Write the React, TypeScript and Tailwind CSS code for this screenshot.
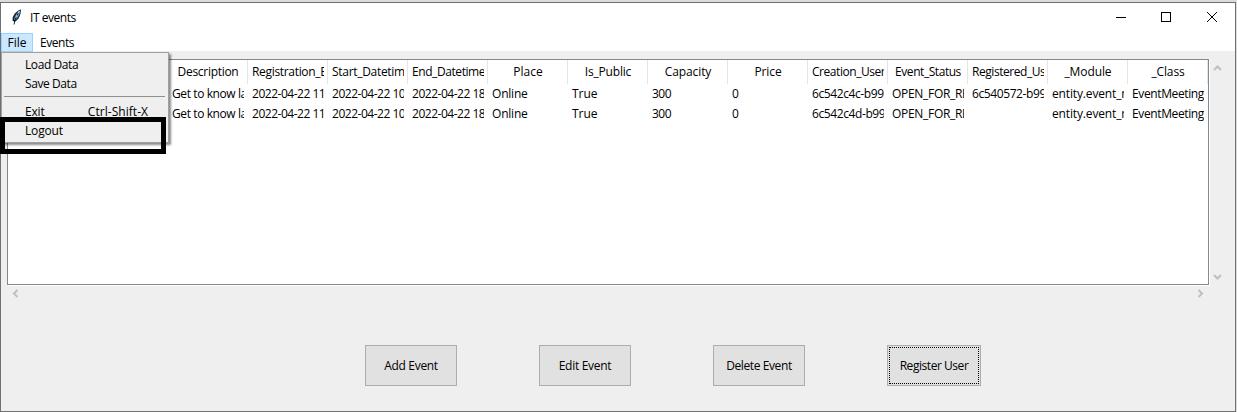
import React from "react";

type Column = { title: string; cells: [string, string]; head: string; body: string };

const columns: Column[] = [
  { title: "", cells: ["", ""], head: "", body: "" },
  { title: "", cells: ["", ""], head: "", body: "" },
  { title: "Description", cells: ["Get to know la", "Get to know la"], head: "tracking-[-0.3px]", body: "tracking-[-0.4px]" },
  { title: "Registration_E", cells: ["2022-04-22 11", "2022-04-22 11"], head: "tracking-[-0.32px]", body: "tracking-[-0.48px]" },
  { title: "Start_Datetim", cells: ["2022-04-22 10", "2022-04-22 10"], head: "tracking-[-0.3px]", body: "tracking-[-0.48px]" },
  { title: "End_Datetime", cells: ["2022-04-22 18", "2022-04-22 18"], head: "tracking-[-0.42px]", body: "tracking-[-0.48px]" },
  { title: "Place", cells: ["Online", "Online"], head: "", body: "tracking-[-0.2px]" },
  { title: "Is_Public", cells: ["True", "True"], head: "tracking-[-0.2px]", body: "" },
  { title: "Capacity", cells: ["300", "300"], head: "tracking-[-0.1px]", body: "tracking-[-0.5px]" },
  { title: "Price", cells: ["0", "0"], head: "tracking-[-0.1px]", body: "" },
  { title: "Creation_User", cells: ["6c542c4c-b99", "6c542c4d-b99"], head: "tracking-[-0.45px]", body: "tracking-[-0.4px]" },
  { title: "Event_Status", cells: ["OPEN_FOR_RE", "OPEN_FOR_RE"], head: "tracking-[-0.45px]", body: "tracking-[-0.3px]" },
  { title: "Registered_Us", cells: ["6c540572-b99", ""], head: "tracking-[-0.45px]", body: "tracking-[-0.4px]" },
  { title: "_Module", cells: ["entity.event_m", "entity.event_m"], head: "tracking-[-0.1px]", body: "tracking-[-0.15px]" },
  { title: "_Class", cells: ["EventMeeting", "EventMeeting"], head: "tracking-[-0.15px]", body: "tracking-[-0.38px]" },
];

function Feather() {
  return (
    <svg width="12" height="17" viewBox="0 0 12 17" className="block">
      <path d="M10 0.5C7 1 3 4.500 1.700 8.500L1.500 11.500L3.500 13C6.500 11.500 9 8 9.500 4.500Z" fill="#1b2129" />
      <path d="M9 1.200C6.500 3 4 6 3 10.500L4.200 11.200C6.500 9 8.500 6 9 3.500Z" fill="#6398d0" />
      <path d="M7.400 4C5.500 7 4 10.500 3 15.500" stroke="#111" strokeWidth="0.9" fill="none" />
      <path d="M8.300 2L7 4.500M6 6L5 8.500" stroke="#b8d8f2" strokeWidth="1" />
    </svg>
  );
}

function Chevron({ d }: { d: string }) {
  return (
    <svg width="9" height="9" viewBox="0 0 9 9" className="block">
      <path d={d} stroke="#bfbfbf" strokeWidth="2" fill="none" />
    </svg>
  );
}

function TitleBar() {
  return (
    <div className="flex h-[30px] shrink-0 items-start justify-between bg-white">
      <div className="flex pl-[10px] pt-[6px]">
        <Feather />
        <span className="ml-[7px] leading-[17px] tracking-[-0.45px]">IT events</span>
      </div>
      <svg width="138" height="30" viewBox="0 0 138 30" stroke="#000" fill="none" shapeRendering="crispEdges">
        <path d="M19 14.500H29" />
        <rect x="64.500" y="9.500" width="9" height="9" />
        <path d="M110 9L120 19M120 9L110 19" shapeRendering="auto" />
      </svg>
    </div>
  );
}

function MenuItem({ label, keys, style }: { label: string; keys?: string; style: string }) {
  return (
    <div className={`flex h-[19px] items-center justify-between pl-[23px] pr-[20px] ${style}`}>
      <span>{label}</span>
      {keys && <span className="tracking-[0.04px]">{keys}</span>}
    </div>
  );
}

function FileMenu() {
  return (
    <div className="absolute left-0 top-[19px] z-10 h-[91px] w-[168px] border border-[#a0a0a0] bg-[#efefef] pt-[2px] shadow-[2px_2px_2px_rgba(0,0,0,0.45)]">
      <MenuItem label="Load Data" style="tracking-[-0.42px]" />
      <MenuItem label="Save Data" style="tracking-[-0.42px]" />
      <div className="ml-[2px] mr-[3px] mb-[5px] mt-[3px] h-px bg-[#919191]" />
      <MenuItem label="Exit" keys="Ctrl-Shift-X" style="tracking-[-0.2px]" />
      <MenuItem label="Logout" style="tracking-[-0.15px]" />
    </div>
  );
}

function MenuBar() {
  return (
    <div className="relative flex h-[18px] shrink-0 bg-white">
      <div className="flex h-[19px] w-[32px] items-center justify-center border border-[#99d1ff] bg-[#cce8ff] pt-px">File</div>
      <div className="flex h-[19px] items-center pl-[7px] pt-px tracking-[-0.45px]">Events</div>
      <FileMenu />
    </div>
  );
}

function Table() {
  return (
    <div className="flex h-[226px] w-[1202px] border border-[#828790] bg-white shadow-[1px_1px_0_#fff]">
      {columns.map((c, i) => (
        <div key={i} className="w-[80px] shrink-0">
          <div className="flex h-[24px] border-r border-[#e5e5e5] pl-[4px] pr-[3px]">
            <div className="flex w-[72px] overflow-hidden whitespace-nowrap leading-[24px]">
              <span className={`mx-auto ${c.head}`}>{c.title}</span>
            </div>
          </div>
          {c.cells.map((text, r) => (
            <div key={r} className="h-[20px] px-[4px]">
              <div className={`h-[20px] overflow-hidden whitespace-nowrap leading-[20px] ${c.body}`}>{text}</div>
            </div>
          ))}
        </div>
      ))}
    </div>
  );
}

function Button({ label, style, focused }: { label: string; style: string; focused?: boolean }) {
  return (
    <button className={`h-[41px] border border-[#adadad] bg-[#e1e1e1] p-px ${focused ? "w-[94px]" : "w-[92px]"}`}>
      <span className={`flex h-full items-center justify-center border pt-px ${focused ? "border-dotted border-black" : "border-transparent"} ${style}`}>
        {label}
      </span>
    </button>
  );
}

export default function App() {
  return (
    <div className="relative flex h-[412px] w-[1237px] flex-col overflow-hidden bg-[#dcdcdc] pr-px pt-[2px] font-['Open_Sans','Noto_Sans',sans-serif] text-[12px] text-black">
      <div className="flex h-[410px] flex-col border border-[#6f7072] bg-[#efefef]">
        <TitleBar />
        <MenuBar />
        <div className="flex pl-[6px] pt-[8px]">
          <Table />
          <div className="flex h-[226px] flex-col justify-between pb-[4px] pl-[4px] pt-[5px]">
            <Chevron d="M1 6L4.500 2.500L8 6" />
            <Chevron d="M1 3L4.500 6.500L8 3" />
          </div>
        </div>
        <div className="flex justify-between pl-[10px] pr-[30px] pt-[4px]">
          <Chevron d="M6.500 1L3 4.500L6.500 8" />
          <Chevron d="M2.500 1L6 4.500L2.500 8" />
        </div>
        <div className="flex gap-[82px] pl-[364px] pt-[47px]">
          <Button label="Add Event" style="tracking-[-0.3px]" />
          <Button label="Edit Event" style="tracking-[-0.3px]" />
          <Button label="Delete Event" style="tracking-[-0.4px]" />
          <Button label="Register User" style="tracking-[-0.45px]" focused />
        </div>
      </div>
      <div className="absolute left-0 top-[117px] z-20 h-[37px] w-[166px] border-[5px] border-black" />
    </div>
  );
}
